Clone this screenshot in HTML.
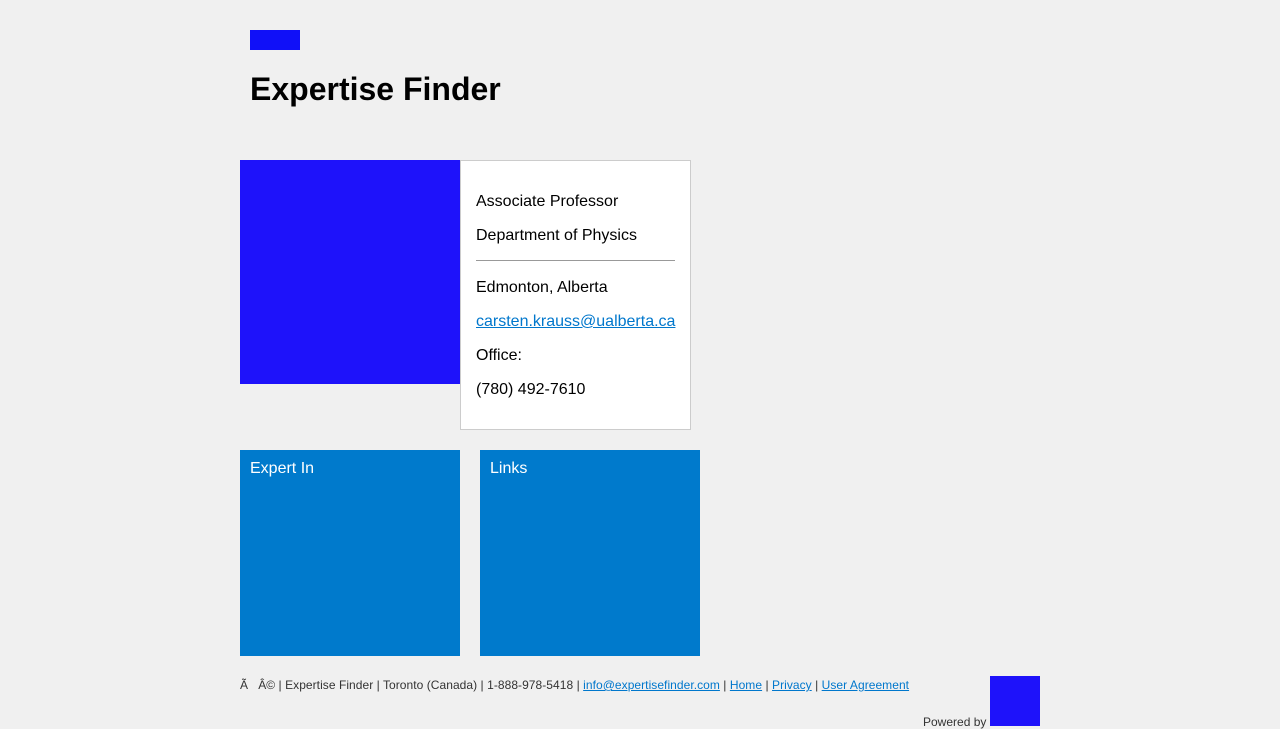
<!DOCTYPE html>
<html><head><style>
body{margin:0;background:#f0f0f0;font-family:"Liberation Sans",sans-serif;width:1280px;height:729px;overflow:hidden;position:relative}
.a{position:absolute}
.card p{margin:0;position:absolute;left:15px;font-size:16px;color:#000}
a{color:#0077cc}
.f{font-size:12px;color:#333}
</style></head><body>
<div class="a" style="left:250px;top:30px;width:50px;height:20px;background:#1010f8"></div>
<div class="a" style="left:250px;top:71px;font-size:32px;font-weight:bold;color:#000">Expertise Finder</div>
<div class="a" style="left:240px;top:160px;width:220px;height:224px;background:#1e12fa"></div>
<div class="a card" style="left:460px;top:160px;width:229px;height:268px;background:#fff;border:1px solid #ccc">
<p style="top:32px">Associate Professor</p>
<p style="top:66px">Department of Physics</p>
<div class="a" style="left:15px;top:99px;width:199px;border-top:1px solid #999"></div>
<p style="top:118px">Edmonton, Alberta</p>
<p style="top:152px"><a href="#">carsten.krauss@ualberta.ca</a></p>
<p style="top:186px">Office:</p>
<p style="top:220px">(780) 492-7610</p>
</div>
<div class="a" style="left:240px;top:450px;width:220px;height:206px;background:#007acc;color:#fff;font-size:16px"><div style="padding:10px 10px">Expert In</div></div>
<div class="a" style="left:480px;top:450px;width:220px;height:206px;background:#007acc;color:#fff;font-size:16px"><div style="padding:10px 10px">Links</div></div>
<div class="a f" style="left:240px;top:678px;letter-spacing:0.05px">Ã &nbsp; Â© | Expertise Finder | Toronto (Canada) | 1-888-978-5418 | <a href="#">info@expertisefinder.com</a> | <a href="#">Home</a> | <a href="#">Privacy</a> | <a href="#">User Agreement</a></div>
<div class="a f" style="left:923px;top:715px">Powered by</div>
<div class="a" style="left:990px;top:676px;width:50px;height:50px;background:#1e12fa"></div>
</body></html>
